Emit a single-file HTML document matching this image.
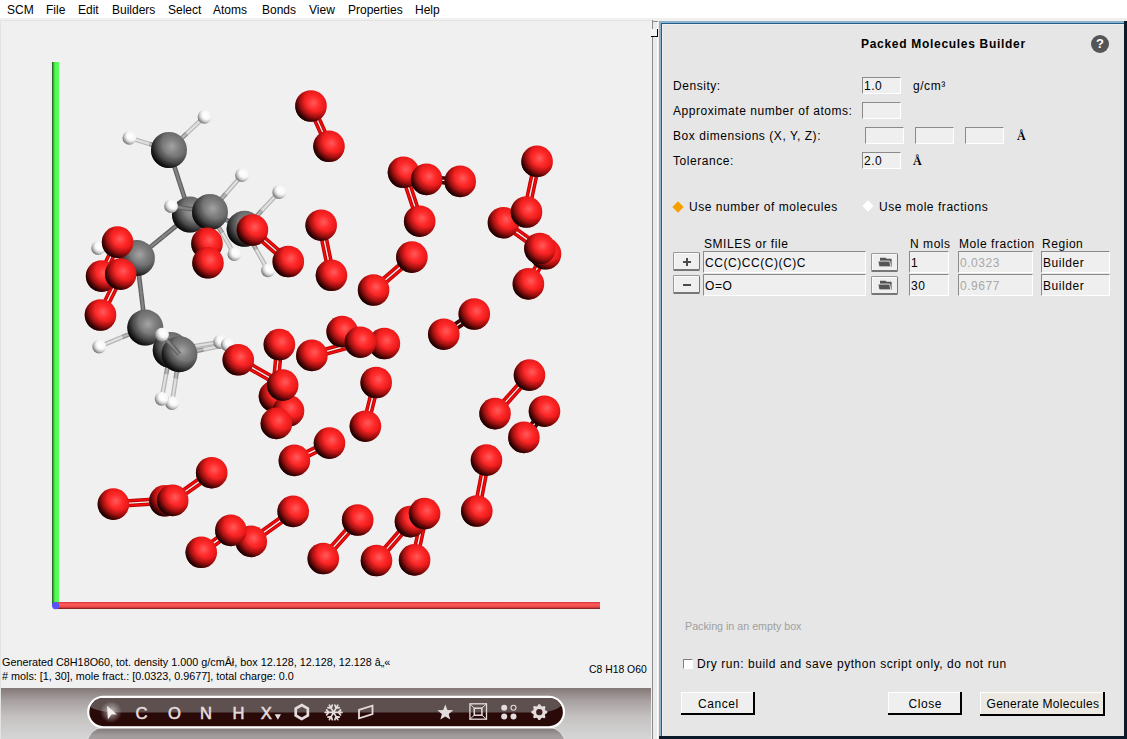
<!DOCTYPE html>
<html><head><meta charset="utf-8">
<style>
*{margin:0;padding:0;box-sizing:border-box}
html,body{width:1127px;height:739px;overflow:hidden;background:#fff;font-family:"Liberation Sans",sans-serif;color:#000}
.a{position:absolute;white-space:nowrap;line-height:1}
.m{position:absolute;top:4px;font-size:12px;line-height:1;white-space:nowrap}
.d{position:absolute;white-space:nowrap;font-size:12px;letter-spacing:0.55px;line-height:1}
.inp{position:absolute;background:#efefef;border-top:1px solid #8a8a8a;border-left:1px solid #8a8a8a;border-right:1px solid #fff;border-bottom:1px solid #fff}
.btn{position:absolute;background:#efefef;border-top:1px solid #999;border-left:1px solid #999;border-right:1px solid #777;border-bottom:2px solid #767676;border-radius:1.5px;box-shadow:inset 1px 1px 0 #fafafa}
.pb{position:absolute;background:#fff;border-right:2px solid #000;border-bottom:2px solid #000;}
.pb i{position:absolute;left:0;top:0;right:0;bottom:0;background:#efefef;border-left:1px solid #fff;border-top:1px solid #fff}
</style></head><body>
<div class="m" style="left:7px">SCM</div><div class="m" style="left:46px">File</div><div class="m" style="left:78px">Edit</div><div class="m" style="left:112px">Builders</div><div class="m" style="left:168px">Select</div><div class="m" style="left:213px">Atoms</div><div class="m" style="left:262px">Bonds</div><div class="m" style="left:309px">View</div><div class="m" style="left:348px">Properties</div><div class="m" style="left:415px">Help</div>
<div style="position:absolute;left:0;top:18px;width:1127px;height:3px;background:#f0f0f0"></div>
<div style="position:absolute;left:0;top:20px;width:652px;height:719px;background:#f0f0f0;border-top:1px solid #e3e3e3;border-left:1px solid #e3e3e3"></div>
<svg width="652" height="632" viewBox="0 20 652 632" style="position:absolute;left:0;top:20px">
<defs>
<radialGradient id="gO" cx="0.56" cy="0.42" r="0.6" fx="0.58" fy="0.4">
<stop offset="0" stop-color="#ff5c5c"/><stop offset="0.35" stop-color="#ff2a2a"/><stop offset="0.75" stop-color="#e41414"/><stop offset="1" stop-color="#d00c0c"/></radialGradient>
<radialGradient id="gS" cx="0.7" cy="0.3" r="0.9" fx="0.7" fy="0.3">
<stop offset="0" stop-color="#000" stop-opacity="0"/><stop offset="0.42" stop-color="#000" stop-opacity="0"/><stop offset="0.62" stop-color="#000" stop-opacity="0.3"/><stop offset="0.77" stop-color="#000" stop-opacity="0.72"/><stop offset="0.88" stop-color="#000" stop-opacity="1"/></radialGradient>
<radialGradient id="gC" cx="0.56" cy="0.42" r="0.6" fx="0.58" fy="0.4">
<stop offset="0" stop-color="#a4a4a4"/><stop offset="0.35" stop-color="#808080"/><stop offset="0.75" stop-color="#646464"/><stop offset="1" stop-color="#5a5a5a"/></radialGradient>
<radialGradient id="gH" cx="0.56" cy="0.42" r="0.6" fx="0.58" fy="0.4">
<stop offset="0" stop-color="#ffffff"/><stop offset="0.5" stop-color="#f8f8f8"/><stop offset="1" stop-color="#e8e8e8"/></radialGradient>
<linearGradient id="gX" x1="0" y1="0" x2="0" y2="1"><stop offset="0" stop-color="#d83a3a"/><stop offset="0.35" stop-color="#ff5a5a"/><stop offset="0.7" stop-color="#f04848"/><stop offset="1" stop-color="#701818"/></linearGradient>
<linearGradient id="gY" x1="0" y1="0" x2="1" y2="0"><stop offset="0" stop-color="#1c501c"/><stop offset="0.28" stop-color="#40d040"/><stop offset="0.5" stop-color="#55f855"/><stop offset="1" stop-color="#58ff58"/></linearGradient>
</defs>
<rect x="52" y="62" width="7" height="544" fill="url(#gY)"/>
<rect x="55" y="602" width="545" height="7" fill="url(#gX)"/>
<circle cx="55.6" cy="605.6" r="3.6" fill="#5555ff"/>

<line x1="169.0" y1="150.0" x2="149.2" y2="143.9" stroke="#8c8c8c" stroke-width="4.6"/><line x1="149.2" y1="143.9" x2="129.4" y2="137.9" stroke="#b4b4b4" stroke-width="4.6"/><line x1="169.0" y1="150.0" x2="149.2" y2="143.9" stroke="#b8b8b8" stroke-width="2.2"/><line x1="149.2" y1="143.9" x2="129.4" y2="137.9" stroke="#e0e0e0" stroke-width="2.2"/>
<line x1="169.0" y1="150.0" x2="186.8" y2="133.4" stroke="#8c8c8c" stroke-width="4.6"/><line x1="186.8" y1="133.4" x2="204.5" y2="116.9" stroke="#b4b4b4" stroke-width="4.6"/><line x1="169.0" y1="150.0" x2="186.8" y2="133.4" stroke="#b8b8b8" stroke-width="2.2"/><line x1="186.8" y1="133.4" x2="204.5" y2="116.9" stroke="#e0e0e0" stroke-width="2.2"/>
<line x1="169.0" y1="150.0" x2="179.5" y2="182.3" stroke="#606060" stroke-width="4.6"/><line x1="179.5" y1="182.3" x2="190.0" y2="214.6" stroke="#606060" stroke-width="4.6"/><line x1="169.0" y1="150.0" x2="179.5" y2="182.3" stroke="#848484" stroke-width="2.2"/><line x1="179.5" y1="182.3" x2="190.0" y2="214.6" stroke="#848484" stroke-width="2.2"/>
<line x1="190.0" y1="214.6" x2="163.4" y2="236.4" stroke="#606060" stroke-width="4.6"/><line x1="163.4" y1="236.4" x2="136.9" y2="258.1" stroke="#606060" stroke-width="4.6"/><line x1="190.0" y1="214.6" x2="163.4" y2="236.4" stroke="#848484" stroke-width="2.2"/><line x1="163.4" y1="236.4" x2="136.9" y2="258.1" stroke="#848484" stroke-width="2.2"/>
<line x1="210.0" y1="212.0" x2="226.0" y2="193.6" stroke="#8c8c8c" stroke-width="4.6"/><line x1="226.0" y1="193.6" x2="242.0" y2="175.2" stroke="#b4b4b4" stroke-width="4.6"/><line x1="210.0" y1="212.0" x2="226.0" y2="193.6" stroke="#b8b8b8" stroke-width="2.2"/><line x1="226.0" y1="193.6" x2="242.0" y2="175.2" stroke="#e0e0e0" stroke-width="2.2"/>
<line x1="210.0" y1="212.0" x2="227.3" y2="220.4" stroke="#606060" stroke-width="4.6"/><line x1="227.3" y1="220.4" x2="244.6" y2="228.8" stroke="#606060" stroke-width="4.6"/><line x1="210.0" y1="212.0" x2="227.3" y2="220.4" stroke="#848484" stroke-width="2.2"/><line x1="227.3" y1="220.4" x2="244.6" y2="228.8" stroke="#848484" stroke-width="2.2"/>
<line x1="210.0" y1="212.0" x2="222.2" y2="233.1" stroke="#8c8c8c" stroke-width="4.6"/><line x1="222.2" y1="233.1" x2="234.4" y2="254.2" stroke="#b4b4b4" stroke-width="4.6"/><line x1="210.0" y1="212.0" x2="222.2" y2="233.1" stroke="#b8b8b8" stroke-width="2.2"/><line x1="222.2" y1="233.1" x2="234.4" y2="254.2" stroke="#e0e0e0" stroke-width="2.2"/>
<line x1="244.6" y1="228.8" x2="261.9" y2="210.4" stroke="#8c8c8c" stroke-width="4.6"/><line x1="261.9" y1="210.4" x2="279.2" y2="192.0" stroke="#b4b4b4" stroke-width="4.6"/><line x1="244.6" y1="228.8" x2="261.9" y2="210.4" stroke="#b8b8b8" stroke-width="2.2"/><line x1="261.9" y1="210.4" x2="279.2" y2="192.0" stroke="#e0e0e0" stroke-width="2.2"/>
<line x1="244.6" y1="228.8" x2="256.3" y2="249.6" stroke="#8c8c8c" stroke-width="4.6"/><line x1="256.3" y1="249.6" x2="268.0" y2="270.4" stroke="#b4b4b4" stroke-width="4.6"/><line x1="244.6" y1="228.8" x2="256.3" y2="249.6" stroke="#b8b8b8" stroke-width="2.2"/><line x1="256.3" y1="249.6" x2="268.0" y2="270.4" stroke="#e0e0e0" stroke-width="2.2"/>
<line x1="136.9" y1="258.1" x2="141.1" y2="292.9" stroke="#606060" stroke-width="4.6"/><line x1="141.1" y1="292.9" x2="145.3" y2="327.6" stroke="#606060" stroke-width="4.6"/><line x1="136.9" y1="258.1" x2="141.1" y2="292.9" stroke="#848484" stroke-width="2.2"/><line x1="141.1" y1="292.9" x2="145.3" y2="327.6" stroke="#848484" stroke-width="2.2"/>
<line x1="136.9" y1="258.1" x2="117.5" y2="253.1" stroke="#8c8c8c" stroke-width="4.6"/><line x1="117.5" y1="253.1" x2="98.1" y2="248.1" stroke="#b4b4b4" stroke-width="4.6"/><line x1="136.9" y1="258.1" x2="117.5" y2="253.1" stroke="#b8b8b8" stroke-width="2.2"/><line x1="117.5" y1="253.1" x2="98.1" y2="248.1" stroke="#e0e0e0" stroke-width="2.2"/>
<line x1="145.3" y1="327.6" x2="122.2" y2="337.1" stroke="#8c8c8c" stroke-width="4.6"/><line x1="122.2" y1="337.1" x2="99.2" y2="346.7" stroke="#b4b4b4" stroke-width="4.6"/><line x1="145.3" y1="327.6" x2="122.2" y2="337.1" stroke="#b8b8b8" stroke-width="2.2"/><line x1="122.2" y1="337.1" x2="99.2" y2="346.7" stroke="#e0e0e0" stroke-width="2.2"/>
<line x1="145.3" y1="327.6" x2="162.4" y2="340.9" stroke="#606060" stroke-width="4.6"/><line x1="162.4" y1="340.9" x2="179.4" y2="354.2" stroke="#606060" stroke-width="4.6"/><line x1="145.3" y1="327.6" x2="162.4" y2="340.9" stroke="#848484" stroke-width="2.2"/><line x1="162.4" y1="340.9" x2="179.4" y2="354.2" stroke="#848484" stroke-width="2.2"/>
<line x1="170.7" y1="350.0" x2="195.4" y2="346.0" stroke="#8c8c8c" stroke-width="4.6"/><line x1="195.4" y1="346.0" x2="220.1" y2="342.0" stroke="#b4b4b4" stroke-width="4.6"/><line x1="170.7" y1="350.0" x2="195.4" y2="346.0" stroke="#b8b8b8" stroke-width="2.2"/><line x1="195.4" y1="346.0" x2="220.1" y2="342.0" stroke="#e0e0e0" stroke-width="2.2"/>
<line x1="179.4" y1="354.2" x2="203.6" y2="349.4" stroke="#8c8c8c" stroke-width="4.6"/><line x1="203.6" y1="349.4" x2="227.7" y2="344.6" stroke="#b4b4b4" stroke-width="4.6"/><line x1="179.4" y1="354.2" x2="203.6" y2="349.4" stroke="#b8b8b8" stroke-width="2.2"/><line x1="203.6" y1="349.4" x2="227.7" y2="344.6" stroke="#e0e0e0" stroke-width="2.2"/>
<line x1="170.7" y1="350.0" x2="166.1" y2="374.4" stroke="#8c8c8c" stroke-width="4.6"/><line x1="166.1" y1="374.4" x2="161.6" y2="398.8" stroke="#b4b4b4" stroke-width="4.6"/><line x1="170.7" y1="350.0" x2="166.1" y2="374.4" stroke="#b8b8b8" stroke-width="2.2"/><line x1="166.1" y1="374.4" x2="161.6" y2="398.8" stroke="#e0e0e0" stroke-width="2.2"/>
<line x1="179.4" y1="354.2" x2="175.7" y2="378.6" stroke="#8c8c8c" stroke-width="4.6"/><line x1="175.7" y1="378.6" x2="172.0" y2="403.1" stroke="#b4b4b4" stroke-width="4.6"/><line x1="179.4" y1="354.2" x2="175.7" y2="378.6" stroke="#b8b8b8" stroke-width="2.2"/><line x1="175.7" y1="378.6" x2="172.0" y2="403.1" stroke="#e0e0e0" stroke-width="2.2"/>
<line x1="313.2" y1="105.0" x2="331.2" y2="145.3" stroke="#b80000" stroke-width="3.5"/><line x1="313.2" y1="105.0" x2="331.2" y2="145.3" stroke="#f20c0c" stroke-width="1.8"/><line x1="308.8" y1="107.0" x2="326.8" y2="147.3" stroke="#b80000" stroke-width="3.5"/><line x1="308.8" y1="107.0" x2="326.8" y2="147.3" stroke="#f20c0c" stroke-width="1.8"/>
<line x1="405.8" y1="171.5" x2="422.0" y2="220.4" stroke="#b80000" stroke-width="3.5"/><line x1="405.8" y1="171.5" x2="422.0" y2="220.4" stroke="#f20c0c" stroke-width="1.8"/><line x1="401.2" y1="173.1" x2="417.4" y2="222.0" stroke="#b80000" stroke-width="3.5"/><line x1="401.2" y1="173.1" x2="417.4" y2="222.0" stroke="#f20c0c" stroke-width="1.8"/>
<line x1="426.7" y1="177.0" x2="460.3" y2="179.0" stroke="#2a0000" stroke-width="3.5"/><line x1="426.7" y1="177.0" x2="460.3" y2="179.0" stroke="#500404" stroke-width="1.8"/><line x1="426.5" y1="181.8" x2="460.1" y2="183.8" stroke="#2a0000" stroke-width="3.5"/><line x1="426.5" y1="181.8" x2="460.1" y2="183.8" stroke="#500404" stroke-width="1.8"/>
<line x1="539.5" y1="161.9" x2="528.9" y2="212.5" stroke="#b80000" stroke-width="3.5"/><line x1="539.5" y1="161.9" x2="528.9" y2="212.5" stroke="#f20c0c" stroke-width="1.8"/><line x1="534.7" y1="160.9" x2="524.1" y2="211.5" stroke="#b80000" stroke-width="3.5"/><line x1="534.7" y1="160.9" x2="524.1" y2="211.5" stroke="#f20c0c" stroke-width="1.8"/>
<line x1="504.9" y1="220.7" x2="541.3" y2="246.6" stroke="#b80000" stroke-width="3.5"/><line x1="504.9" y1="220.7" x2="541.3" y2="246.6" stroke="#f20c0c" stroke-width="1.8"/><line x1="502.1" y1="224.7" x2="538.5" y2="250.6" stroke="#b80000" stroke-width="3.5"/><line x1="502.1" y1="224.7" x2="538.5" y2="250.6" stroke="#f20c0c" stroke-width="1.8"/>
<line x1="547.6" y1="255.0" x2="530.5" y2="285.1" stroke="#b80000" stroke-width="3.5"/><line x1="547.6" y1="255.0" x2="530.5" y2="285.1" stroke="#f20c0c" stroke-width="1.8"/><line x1="543.4" y1="252.6" x2="526.3" y2="282.7" stroke="#b80000" stroke-width="3.5"/><line x1="543.4" y1="252.6" x2="526.3" y2="282.7" stroke="#f20c0c" stroke-width="1.8"/>
<line x1="323.6" y1="224.7" x2="333.9" y2="274.8" stroke="#b80000" stroke-width="3.5"/><line x1="323.6" y1="224.7" x2="333.9" y2="274.8" stroke="#f20c0c" stroke-width="1.8"/><line x1="318.8" y1="225.7" x2="329.1" y2="275.8" stroke="#b80000" stroke-width="3.5"/><line x1="318.8" y1="225.7" x2="329.1" y2="275.8" stroke="#f20c0c" stroke-width="1.8"/>
<line x1="413.5" y1="259.0" x2="375.2" y2="291.9" stroke="#b80000" stroke-width="3.5"/><line x1="413.5" y1="259.0" x2="375.2" y2="291.9" stroke="#f20c0c" stroke-width="1.8"/><line x1="410.3" y1="255.2" x2="372.0" y2="288.1" stroke="#b80000" stroke-width="3.5"/><line x1="410.3" y1="255.2" x2="372.0" y2="288.1" stroke="#f20c0c" stroke-width="1.8"/>
<line x1="475.7" y1="316.0" x2="445.2" y2="336.2" stroke="#2a0000" stroke-width="3.5"/><line x1="475.7" y1="316.0" x2="445.2" y2="336.2" stroke="#500404" stroke-width="1.8"/><line x1="472.9" y1="312.0" x2="442.4" y2="332.2" stroke="#2a0000" stroke-width="3.5"/><line x1="472.9" y1="312.0" x2="442.4" y2="332.2" stroke="#500404" stroke-width="1.8"/>
<line x1="311.3" y1="353.0" x2="359.8" y2="339.8" stroke="#b80000" stroke-width="3.5"/><line x1="311.3" y1="353.0" x2="359.8" y2="339.8" stroke="#f20c0c" stroke-width="1.8"/><line x1="312.5" y1="357.8" x2="361.0" y2="344.6" stroke="#b80000" stroke-width="3.5"/><line x1="312.5" y1="357.8" x2="361.0" y2="344.6" stroke="#f20c0c" stroke-width="1.8"/>
<line x1="342.9" y1="329.2" x2="385.1" y2="341.1" stroke="#b80000" stroke-width="3.5"/><line x1="342.9" y1="329.2" x2="385.1" y2="341.1" stroke="#f20c0c" stroke-width="1.8"/><line x1="341.5" y1="334.0" x2="383.7" y2="345.9" stroke="#b80000" stroke-width="3.5"/><line x1="341.5" y1="334.0" x2="383.7" y2="345.9" stroke="#f20c0c" stroke-width="1.8"/>
<line x1="378.6" y1="383.1" x2="367.8" y2="426.8" stroke="#b80000" stroke-width="3.5"/><line x1="378.6" y1="383.1" x2="367.8" y2="426.8" stroke="#f20c0c" stroke-width="1.8"/><line x1="373.8" y1="381.9" x2="363.0" y2="425.6" stroke="#b80000" stroke-width="3.5"/><line x1="373.8" y1="381.9" x2="363.0" y2="425.6" stroke="#f20c0c" stroke-width="1.8"/>
<line x1="239.5" y1="357.7" x2="283.9" y2="383.0" stroke="#b80000" stroke-width="3.5"/><line x1="239.5" y1="357.7" x2="283.9" y2="383.0" stroke="#f20c0c" stroke-width="1.8"/><line x1="237.1" y1="361.9" x2="281.5" y2="387.2" stroke="#b80000" stroke-width="3.5"/><line x1="237.1" y1="361.9" x2="281.5" y2="387.2" stroke="#f20c0c" stroke-width="1.8"/>
<line x1="281.8" y1="344.8" x2="276.9" y2="396.5" stroke="#b80000" stroke-width="3.5"/><line x1="281.8" y1="344.8" x2="276.9" y2="396.5" stroke="#f20c0c" stroke-width="1.8"/><line x1="277.0" y1="344.4" x2="272.1" y2="396.1" stroke="#b80000" stroke-width="3.5"/><line x1="277.0" y1="344.4" x2="272.1" y2="396.1" stroke="#f20c0c" stroke-width="1.8"/>
<line x1="274.6" y1="421.7" x2="286.7" y2="409.1" stroke="#b80000" stroke-width="3.5"/><line x1="274.6" y1="421.7" x2="286.7" y2="409.1" stroke="#f20c0c" stroke-width="1.8"/><line x1="278.2" y1="425.1" x2="290.3" y2="412.5" stroke="#b80000" stroke-width="3.5"/><line x1="278.2" y1="425.1" x2="290.3" y2="412.5" stroke="#f20c0c" stroke-width="1.8"/>
<line x1="330.6" y1="445.3" x2="295.5" y2="462.6" stroke="#b80000" stroke-width="3.5"/><line x1="330.6" y1="445.3" x2="295.5" y2="462.6" stroke="#f20c0c" stroke-width="1.8"/><line x1="328.4" y1="440.9" x2="293.3" y2="458.2" stroke="#b80000" stroke-width="3.5"/><line x1="328.4" y1="440.9" x2="293.3" y2="458.2" stroke="#f20c0c" stroke-width="1.8"/>
<line x1="531.3" y1="376.7" x2="496.9" y2="415.2" stroke="#b80000" stroke-width="3.5"/><line x1="531.3" y1="376.7" x2="496.9" y2="415.2" stroke="#f20c0c" stroke-width="1.8"/><line x1="527.7" y1="373.5" x2="493.3" y2="412.0" stroke="#b80000" stroke-width="3.5"/><line x1="527.7" y1="373.5" x2="493.3" y2="412.0" stroke="#f20c0c" stroke-width="1.8"/>
<line x1="546.4" y1="412.7" x2="525.8" y2="438.9" stroke="#2a0000" stroke-width="3.5"/><line x1="546.4" y1="412.7" x2="525.8" y2="438.9" stroke="#500404" stroke-width="1.8"/><line x1="542.6" y1="409.7" x2="522.0" y2="435.9" stroke="#2a0000" stroke-width="3.5"/><line x1="542.6" y1="409.7" x2="522.0" y2="435.9" stroke="#500404" stroke-width="1.8"/>
<line x1="488.9" y1="460.6" x2="479.2" y2="511.5" stroke="#b80000" stroke-width="3.5"/><line x1="488.9" y1="460.6" x2="479.2" y2="511.5" stroke="#f20c0c" stroke-width="1.8"/><line x1="484.1" y1="459.6" x2="474.4" y2="510.5" stroke="#b80000" stroke-width="3.5"/><line x1="484.1" y1="459.6" x2="474.4" y2="510.5" stroke="#f20c0c" stroke-width="1.8"/>
<line x1="427.0" y1="514.1" x2="417.0" y2="560.4" stroke="#b80000" stroke-width="3.5"/><line x1="427.0" y1="514.1" x2="417.0" y2="560.4" stroke="#f20c0c" stroke-width="1.8"/><line x1="422.2" y1="513.1" x2="412.2" y2="559.4" stroke="#b80000" stroke-width="3.5"/><line x1="422.2" y1="513.1" x2="412.2" y2="559.4" stroke="#f20c0c" stroke-width="1.8"/>
<line x1="412.3" y1="523.2" x2="378.3" y2="562.1" stroke="#b80000" stroke-width="3.5"/><line x1="412.3" y1="523.2" x2="378.3" y2="562.1" stroke="#f20c0c" stroke-width="1.8"/><line x1="408.7" y1="520.0" x2="374.7" y2="558.9" stroke="#b80000" stroke-width="3.5"/><line x1="408.7" y1="520.0" x2="374.7" y2="558.9" stroke="#f20c0c" stroke-width="1.8"/>
<line x1="359.5" y1="521.6" x2="325.1" y2="560.1" stroke="#b80000" stroke-width="3.5"/><line x1="359.5" y1="521.6" x2="325.1" y2="560.1" stroke="#f20c0c" stroke-width="1.8"/><line x1="355.9" y1="518.4" x2="321.5" y2="556.9" stroke="#b80000" stroke-width="3.5"/><line x1="355.9" y1="518.4" x2="321.5" y2="556.9" stroke="#f20c0c" stroke-width="1.8"/>
<line x1="294.6" y1="513.4" x2="252.7" y2="543.4" stroke="#b80000" stroke-width="3.5"/><line x1="294.6" y1="513.4" x2="252.7" y2="543.4" stroke="#f20c0c" stroke-width="1.8"/><line x1="291.8" y1="509.4" x2="249.9" y2="539.4" stroke="#b80000" stroke-width="3.5"/><line x1="291.8" y1="509.4" x2="249.9" y2="539.4" stroke="#f20c0c" stroke-width="1.8"/>
<line x1="232.4" y1="532.4" x2="202.8" y2="554.3" stroke="#b80000" stroke-width="3.5"/><line x1="232.4" y1="532.4" x2="202.8" y2="554.3" stroke="#f20c0c" stroke-width="1.8"/><line x1="229.4" y1="528.4" x2="199.8" y2="550.3" stroke="#b80000" stroke-width="3.5"/><line x1="229.4" y1="528.4" x2="199.8" y2="550.3" stroke="#f20c0c" stroke-width="1.8"/>
<line x1="113.2" y1="501.7" x2="164.7" y2="498.4" stroke="#b80000" stroke-width="3.5"/><line x1="113.2" y1="501.7" x2="164.7" y2="498.4" stroke="#f20c0c" stroke-width="1.8"/><line x1="113.6" y1="506.5" x2="165.1" y2="503.2" stroke="#b80000" stroke-width="3.5"/><line x1="113.6" y1="506.5" x2="165.1" y2="503.2" stroke="#f20c0c" stroke-width="1.8"/>
<line x1="171.3" y1="498.4" x2="210.3" y2="470.7" stroke="#b80000" stroke-width="3.5"/><line x1="171.3" y1="498.4" x2="210.3" y2="470.7" stroke="#f20c0c" stroke-width="1.8"/><line x1="174.1" y1="502.4" x2="213.1" y2="474.7" stroke="#b80000" stroke-width="3.5"/><line x1="174.1" y1="502.4" x2="213.1" y2="474.7" stroke="#f20c0c" stroke-width="1.8"/>
<line x1="209.4" y1="243.3" x2="210.4" y2="262.7" stroke="#b80000" stroke-width="3.5"/><line x1="209.4" y1="243.3" x2="210.4" y2="262.7" stroke="#f20c0c" stroke-width="1.8"/><line x1="204.6" y1="243.5" x2="205.6" y2="262.9" stroke="#b80000" stroke-width="3.5"/><line x1="204.6" y1="243.5" x2="205.6" y2="262.9" stroke="#f20c0c" stroke-width="1.8"/>
<line x1="254.0" y1="228.2" x2="289.9" y2="259.7" stroke="#b80000" stroke-width="3.5"/><line x1="254.0" y1="228.2" x2="289.9" y2="259.7" stroke="#f20c0c" stroke-width="1.8"/><line x1="250.8" y1="231.8" x2="286.7" y2="263.3" stroke="#b80000" stroke-width="3.5"/><line x1="250.8" y1="231.8" x2="286.7" y2="263.3" stroke="#f20c0c" stroke-width="1.8"/>
<line x1="119.8" y1="243.1" x2="103.8" y2="277.1" stroke="#b80000" stroke-width="3.5"/><line x1="119.8" y1="243.1" x2="103.8" y2="277.1" stroke="#f20c0c" stroke-width="1.8"/><line x1="115.4" y1="241.1" x2="99.4" y2="275.1" stroke="#b80000" stroke-width="3.5"/><line x1="115.4" y1="241.1" x2="99.4" y2="275.1" stroke="#f20c0c" stroke-width="1.8"/>
<line x1="122.9" y1="275.2" x2="102.7" y2="316.1" stroke="#b80000" stroke-width="3.5"/><line x1="122.9" y1="275.2" x2="102.7" y2="316.1" stroke="#f20c0c" stroke-width="1.8"/><line x1="118.5" y1="273.0" x2="98.3" y2="313.9" stroke="#b80000" stroke-width="3.5"/><line x1="118.5" y1="273.0" x2="98.3" y2="313.9" stroke="#f20c0c" stroke-width="1.8"/>
<circle cx="169.0" cy="150.0" r="18" fill="url(#gC)"/><circle cx="169.0" cy="150.0" r="18" fill="url(#gS)" opacity="1"/>
<circle cx="129.4" cy="137.9" r="6.9" fill="url(#gH)"/><circle cx="129.4" cy="137.9" r="6.9" fill="url(#gS)" opacity="0.55"/>
<circle cx="204.5" cy="116.9" r="6.9" fill="url(#gH)"/><circle cx="204.5" cy="116.9" r="6.9" fill="url(#gS)" opacity="0.55"/>
<circle cx="98.1" cy="248.1" r="6.9" fill="url(#gH)"/><circle cx="98.1" cy="248.1" r="6.9" fill="url(#gS)" opacity="0.55"/>
<circle cx="136.9" cy="258.1" r="18" fill="url(#gC)"/><circle cx="136.9" cy="258.1" r="18" fill="url(#gS)" opacity="1"/>
<circle cx="190.0" cy="214.6" r="18" fill="url(#gC)"/><circle cx="190.0" cy="214.6" r="18" fill="url(#gS)" opacity="1"/>
<line x1="210.0" y1="212.0" x2="190.5" y2="209.1" stroke="#606060" stroke-width="4.6"/><line x1="190.5" y1="209.1" x2="171.0" y2="206.1" stroke="#606060" stroke-width="4.6"/><line x1="210.0" y1="212.0" x2="190.5" y2="209.1" stroke="#848484" stroke-width="2.2"/><line x1="190.5" y1="209.1" x2="171.0" y2="206.1" stroke="#848484" stroke-width="2.2"/>
<circle cx="171.0" cy="206.1" r="6.9" fill="url(#gH)"/><circle cx="171.0" cy="206.1" r="6.9" fill="url(#gS)" opacity="0.55"/>
<circle cx="242.0" cy="175.2" r="6.9" fill="url(#gH)"/><circle cx="242.0" cy="175.2" r="6.9" fill="url(#gS)" opacity="0.55"/>
<circle cx="279.2" cy="192.0" r="6.9" fill="url(#gH)"/><circle cx="279.2" cy="192.0" r="6.9" fill="url(#gS)" opacity="0.55"/>
<circle cx="210.0" cy="212.0" r="18" fill="url(#gC)"/><circle cx="210.0" cy="212.0" r="18" fill="url(#gS)" opacity="1"/>
<circle cx="244.6" cy="228.8" r="18" fill="url(#gC)"/><circle cx="244.6" cy="228.8" r="18" fill="url(#gS)" opacity="1"/>
<circle cx="268.0" cy="270.4" r="6.9" fill="url(#gH)"/><circle cx="268.0" cy="270.4" r="6.9" fill="url(#gS)" opacity="0.55"/>
<circle cx="145.3" cy="327.6" r="18" fill="url(#gC)"/><circle cx="145.3" cy="327.6" r="18" fill="url(#gS)" opacity="1"/>
<circle cx="99.2" cy="346.7" r="6.9" fill="url(#gH)"/><circle cx="99.2" cy="346.7" r="6.9" fill="url(#gS)" opacity="0.55"/>
<circle cx="170.7" cy="350.0" r="18" fill="url(#gC)"/><circle cx="170.7" cy="350.0" r="18" fill="url(#gS)" opacity="1"/>
<circle cx="172.0" cy="403.1" r="6.9" fill="url(#gH)"/><circle cx="172.0" cy="403.1" r="6.9" fill="url(#gS)" opacity="0.55"/>
<circle cx="161.6" cy="398.8" r="6.9" fill="url(#gH)"/><circle cx="161.6" cy="398.8" r="6.9" fill="url(#gS)" opacity="0.55"/>
<circle cx="179.4" cy="354.2" r="18" fill="url(#gC)"/><circle cx="179.4" cy="354.2" r="18" fill="url(#gS)" opacity="1"/>
<line x1="179.4" y1="354.2" x2="170.7" y2="344.4" stroke="#606060" stroke-width="4.6"/><line x1="170.7" y1="344.4" x2="162.0" y2="334.7" stroke="#606060" stroke-width="4.6"/><line x1="179.4" y1="354.2" x2="170.7" y2="344.4" stroke="#848484" stroke-width="2.2"/><line x1="170.7" y1="344.4" x2="162.0" y2="334.7" stroke="#848484" stroke-width="2.2"/>
<circle cx="162.0" cy="334.7" r="6.9" fill="url(#gH)"/><circle cx="162.0" cy="334.7" r="6.9" fill="url(#gS)" opacity="0.55"/>
<circle cx="220.1" cy="342.0" r="6.9" fill="url(#gH)"/><circle cx="220.1" cy="342.0" r="6.9" fill="url(#gS)" opacity="0.55"/>
<circle cx="227.7" cy="344.6" r="6.9" fill="url(#gH)"/><circle cx="227.7" cy="344.6" r="6.9" fill="url(#gS)" opacity="0.55"/>
<circle cx="234.4" cy="254.2" r="6.9" fill="url(#gH)"/><circle cx="234.4" cy="254.2" r="6.9" fill="url(#gS)" opacity="0.55"/>
<circle cx="207.0" cy="243.4" r="15.8" fill="url(#gO)"/><circle cx="207.0" cy="243.4" r="15.8" fill="url(#gS)" opacity="1"/>
<circle cx="208.0" cy="262.8" r="15.8" fill="url(#gO)"/><circle cx="208.0" cy="262.8" r="15.8" fill="url(#gS)" opacity="1"/>
<circle cx="252.4" cy="230.0" r="15.8" fill="url(#gO)"/><circle cx="252.4" cy="230.0" r="15.8" fill="url(#gS)" opacity="1"/>
<circle cx="288.3" cy="261.5" r="15.8" fill="url(#gO)"/><circle cx="288.3" cy="261.5" r="15.8" fill="url(#gS)" opacity="1"/>
<circle cx="101.6" cy="276.1" r="15.8" fill="url(#gO)"/><circle cx="101.6" cy="276.1" r="15.8" fill="url(#gS)" opacity="1"/>
<circle cx="117.6" cy="242.1" r="15.8" fill="url(#gO)"/><circle cx="117.6" cy="242.1" r="15.8" fill="url(#gS)" opacity="1"/>
<circle cx="100.5" cy="315.0" r="15.8" fill="url(#gO)"/><circle cx="100.5" cy="315.0" r="15.8" fill="url(#gS)" opacity="1"/>
<circle cx="120.7" cy="274.1" r="15.8" fill="url(#gO)"/><circle cx="120.7" cy="274.1" r="15.8" fill="url(#gS)" opacity="1"/>
<circle cx="311.0" cy="106.0" r="15.8" fill="url(#gO)"/><circle cx="311.0" cy="106.0" r="15.8" fill="url(#gS)" opacity="1"/>
<circle cx="329.0" cy="146.3" r="15.8" fill="url(#gO)"/><circle cx="329.0" cy="146.3" r="15.8" fill="url(#gS)" opacity="1"/>
<circle cx="403.5" cy="172.3" r="15.8" fill="url(#gO)"/><circle cx="403.5" cy="172.3" r="15.8" fill="url(#gS)" opacity="1"/>
<circle cx="419.7" cy="221.2" r="15.8" fill="url(#gO)"/><circle cx="419.7" cy="221.2" r="15.8" fill="url(#gS)" opacity="1"/>
<circle cx="426.6" cy="179.4" r="15.8" fill="url(#gO)"/><circle cx="426.6" cy="179.4" r="15.8" fill="url(#gS)" opacity="1"/>
<circle cx="460.2" cy="181.4" r="15.8" fill="url(#gO)"/><circle cx="460.2" cy="181.4" r="15.8" fill="url(#gS)" opacity="1"/>
<circle cx="537.1" cy="161.4" r="15.8" fill="url(#gO)"/><circle cx="537.1" cy="161.4" r="15.8" fill="url(#gS)" opacity="1"/>
<circle cx="545.5" cy="253.8" r="15.8" fill="url(#gO)"/><circle cx="545.5" cy="253.8" r="15.8" fill="url(#gS)" opacity="1"/>
<circle cx="528.4" cy="283.9" r="15.8" fill="url(#gO)"/><circle cx="528.4" cy="283.9" r="15.8" fill="url(#gS)" opacity="1"/>
<circle cx="503.5" cy="222.7" r="15.8" fill="url(#gO)"/><circle cx="503.5" cy="222.7" r="15.8" fill="url(#gS)" opacity="1"/>
<circle cx="526.5" cy="212.0" r="15.8" fill="url(#gO)"/><circle cx="526.5" cy="212.0" r="15.8" fill="url(#gS)" opacity="1"/>
<circle cx="539.9" cy="248.6" r="15.8" fill="url(#gO)"/><circle cx="539.9" cy="248.6" r="15.8" fill="url(#gS)" opacity="1"/>
<circle cx="321.2" cy="225.2" r="15.8" fill="url(#gO)"/><circle cx="321.2" cy="225.2" r="15.8" fill="url(#gS)" opacity="1"/>
<circle cx="331.5" cy="275.3" r="15.8" fill="url(#gO)"/><circle cx="331.5" cy="275.3" r="15.8" fill="url(#gS)" opacity="1"/>
<circle cx="411.9" cy="257.1" r="15.8" fill="url(#gO)"/><circle cx="411.9" cy="257.1" r="15.8" fill="url(#gS)" opacity="1"/>
<circle cx="373.6" cy="290.0" r="15.8" fill="url(#gO)"/><circle cx="373.6" cy="290.0" r="15.8" fill="url(#gS)" opacity="1"/>
<circle cx="474.3" cy="314.0" r="15.8" fill="url(#gO)"/><circle cx="474.3" cy="314.0" r="15.8" fill="url(#gS)" opacity="1"/>
<circle cx="443.8" cy="334.2" r="15.8" fill="url(#gO)"/><circle cx="443.8" cy="334.2" r="15.8" fill="url(#gS)" opacity="1"/>
<circle cx="342.2" cy="331.6" r="15.8" fill="url(#gO)"/><circle cx="342.2" cy="331.6" r="15.8" fill="url(#gS)" opacity="1"/>
<circle cx="384.4" cy="343.5" r="15.8" fill="url(#gO)"/><circle cx="384.4" cy="343.5" r="15.8" fill="url(#gS)" opacity="1"/>
<circle cx="311.9" cy="355.4" r="15.8" fill="url(#gO)"/><circle cx="311.9" cy="355.4" r="15.8" fill="url(#gS)" opacity="1"/>
<circle cx="360.4" cy="342.2" r="15.8" fill="url(#gO)"/><circle cx="360.4" cy="342.2" r="15.8" fill="url(#gS)" opacity="1"/>
<circle cx="376.2" cy="382.5" r="15.8" fill="url(#gO)"/><circle cx="376.2" cy="382.5" r="15.8" fill="url(#gS)" opacity="1"/>
<circle cx="365.4" cy="426.2" r="15.8" fill="url(#gO)"/><circle cx="365.4" cy="426.2" r="15.8" fill="url(#gS)" opacity="1"/>
<circle cx="238.3" cy="359.8" r="15.8" fill="url(#gO)"/><circle cx="238.3" cy="359.8" r="15.8" fill="url(#gS)" opacity="1"/>
<circle cx="279.4" cy="344.6" r="15.8" fill="url(#gO)"/><circle cx="279.4" cy="344.6" r="15.8" fill="url(#gS)" opacity="1"/>
<circle cx="274.5" cy="396.3" r="15.8" fill="url(#gO)"/><circle cx="274.5" cy="396.3" r="15.8" fill="url(#gS)" opacity="1"/>
<circle cx="288.5" cy="410.8" r="15.8" fill="url(#gO)"/><circle cx="288.5" cy="410.8" r="15.8" fill="url(#gS)" opacity="1"/>
<circle cx="282.7" cy="385.1" r="15.8" fill="url(#gO)"/><circle cx="282.7" cy="385.1" r="15.8" fill="url(#gS)" opacity="1"/>
<circle cx="276.4" cy="423.4" r="15.8" fill="url(#gO)"/><circle cx="276.4" cy="423.4" r="15.8" fill="url(#gS)" opacity="1"/>
<circle cx="329.5" cy="443.1" r="15.8" fill="url(#gO)"/><circle cx="329.5" cy="443.1" r="15.8" fill="url(#gS)" opacity="1"/>
<circle cx="294.4" cy="460.4" r="15.8" fill="url(#gO)"/><circle cx="294.4" cy="460.4" r="15.8" fill="url(#gS)" opacity="1"/>
<circle cx="529.5" cy="375.1" r="15.8" fill="url(#gO)"/><circle cx="529.5" cy="375.1" r="15.8" fill="url(#gS)" opacity="1"/>
<circle cx="495.1" cy="413.6" r="15.8" fill="url(#gO)"/><circle cx="495.1" cy="413.6" r="15.8" fill="url(#gS)" opacity="1"/>
<circle cx="544.5" cy="411.2" r="15.8" fill="url(#gO)"/><circle cx="544.5" cy="411.2" r="15.8" fill="url(#gS)" opacity="1"/>
<circle cx="523.9" cy="437.4" r="15.8" fill="url(#gO)"/><circle cx="523.9" cy="437.4" r="15.8" fill="url(#gS)" opacity="1"/>
<circle cx="486.5" cy="460.1" r="15.8" fill="url(#gO)"/><circle cx="486.5" cy="460.1" r="15.8" fill="url(#gS)" opacity="1"/>
<circle cx="476.8" cy="511.0" r="15.8" fill="url(#gO)"/><circle cx="476.8" cy="511.0" r="15.8" fill="url(#gS)" opacity="1"/>
<circle cx="410.5" cy="521.6" r="15.8" fill="url(#gO)"/><circle cx="410.5" cy="521.6" r="15.8" fill="url(#gS)" opacity="1"/>
<circle cx="376.5" cy="560.5" r="15.8" fill="url(#gO)"/><circle cx="376.5" cy="560.5" r="15.8" fill="url(#gS)" opacity="1"/>
<circle cx="424.6" cy="513.6" r="15.8" fill="url(#gO)"/><circle cx="424.6" cy="513.6" r="15.8" fill="url(#gS)" opacity="1"/>
<circle cx="414.6" cy="559.9" r="15.8" fill="url(#gO)"/><circle cx="414.6" cy="559.9" r="15.8" fill="url(#gS)" opacity="1"/>
<circle cx="357.7" cy="520.0" r="15.8" fill="url(#gO)"/><circle cx="357.7" cy="520.0" r="15.8" fill="url(#gS)" opacity="1"/>
<circle cx="323.3" cy="558.5" r="15.8" fill="url(#gO)"/><circle cx="323.3" cy="558.5" r="15.8" fill="url(#gS)" opacity="1"/>
<circle cx="251.3" cy="541.4" r="15.8" fill="url(#gO)"/><circle cx="251.3" cy="541.4" r="15.8" fill="url(#gS)" opacity="1"/>
<circle cx="293.2" cy="511.4" r="15.8" fill="url(#gO)"/><circle cx="293.2" cy="511.4" r="15.8" fill="url(#gS)" opacity="1"/>
<circle cx="201.3" cy="552.3" r="15.8" fill="url(#gO)"/><circle cx="201.3" cy="552.3" r="15.8" fill="url(#gS)" opacity="1"/>
<circle cx="230.9" cy="530.4" r="15.8" fill="url(#gO)"/><circle cx="230.9" cy="530.4" r="15.8" fill="url(#gS)" opacity="1"/>
<circle cx="113.4" cy="504.1" r="15.8" fill="url(#gO)"/><circle cx="113.4" cy="504.1" r="15.8" fill="url(#gS)" opacity="1"/>
<circle cx="164.9" cy="500.8" r="15.8" fill="url(#gO)"/><circle cx="164.9" cy="500.8" r="15.8" fill="url(#gS)" opacity="1"/>
<circle cx="211.7" cy="472.7" r="15.8" fill="url(#gO)"/><circle cx="211.7" cy="472.7" r="15.8" fill="url(#gS)" opacity="1"/>
<circle cx="172.7" cy="500.4" r="15.8" fill="url(#gO)"/><circle cx="172.7" cy="500.4" r="15.8" fill="url(#gS)" opacity="1"/>
</svg>
<div class="a" style="left:2px;top:657px;font-size:10.8px">Generated C8H18O60, tot. density 1.000 g/cmÂł, box 12.128, 12.128, 12.128 â„«</div>
<div class="a" style="left:2px;top:671px;font-size:10.8px"># mols: [1, 30], mole fract.: [0.0323, 0.9677], total charge: 0.0</div>
<div class="a" style="left:589px;top:665px;font-size:10.4px">C8 H18 O60</div>
<!-- toolbar -->
<div style="position:absolute;left:1px;top:688px;width:650px;height:51px;background:linear-gradient(#847878 0,#a8a1a1 25%,#c4c0c0 55%,#d6d6d6 100%)"></div>
<svg class="a" width="652" height="51" viewBox="0 688 652 51" style="left:0;top:688px">
<defs>
<radialGradient id="glow" cx="0.5" cy="0.5" r="0.5"><stop offset="0" stop-color="#fff" stop-opacity="0.7"/><stop offset="0.5" stop-color="#fff" stop-opacity="0.3"/><stop offset="1" stop-color="#fff" stop-opacity="0"/></radialGradient>
<clipPath id="pc"><rect x="89.3" y="698" width="473.6" height="28.2" rx="14.1"/></clipPath>
</defs>
<linearGradient id="refl" x1="0" y1="0" x2="0" y2="1"><stop offset="0" stop-color="#7e7777"/><stop offset="0.25" stop-color="#a29c9c"/><stop offset="1" stop-color="#b6b2b2"/></linearGradient>
<rect x="87.1" y="727.5" width="478" height="32.6" rx="16.3" fill="url(#refl)" stroke="#ececec" stroke-width="1" stroke-opacity="0.8"/>
<rect x="87.1" y="695.8" width="478" height="32.6" rx="16.3" fill="#fdfdfd"/>
<g clip-path="url(#pc)">
<rect x="89" y="697.8" width="474" height="29" fill="#2a0909"/>
<path d="M89 697.8 H563 V704 Q556 712 540 712.6 H120 Q96 712 89 706Z" fill="#5f5050"/>
<circle cx="111" cy="712" r="11" fill="url(#glow)"/>
</g>
<path d="M107.1 705.8 L116.9 714.6 L111.6 714.2 L107.9 719.4Z" fill="#f4f0f0"/>
<g fill="#e4dcdc" stroke="#e4dcdc" stroke-width="0.55" font-family="Liberation Sans" font-size="16.6px" text-anchor="middle">
<text x="141.6" y="719.2">C</text><text x="174.4" y="719.2">O</text><text x="206" y="719.2">N</text><text x="238.5" y="719.2">H</text><text x="266.4" y="719.2">X</text>
</g>
<path d="M274.7 714.2 H281 L277.85 719.8Z" fill="#e4dcdc"/>
<path d="M301.80 719.00 L295.74 715.50 L295.74 708.50 L301.80 705.00 L307.86 708.50 L307.86 715.50Z" fill="none" stroke="#e4dcdc" stroke-width="2.7"/>
<path d="M333.60 712.40L342.00 712.40M338.47 712.40L340.59 709.87M338.47 712.40L340.59 714.93M333.60 712.40L337.80 719.67M336.04 716.62L339.29 717.19M336.04 716.62L334.91 719.72M333.60 712.40L329.40 719.67M331.16 716.62L332.29 719.72M331.16 716.62L327.91 717.19M333.60 712.40L325.20 712.40M328.73 712.40L326.61 714.93M328.73 712.40L326.61 709.87M333.60 712.40L329.40 705.13M331.16 708.18L327.91 707.61M331.16 708.18L332.29 705.08M333.60 712.40L337.80 705.13M336.04 708.18L334.91 705.08M336.04 708.18L339.29 707.61" fill="none" stroke="#e4dcdc" stroke-width="1.7" stroke-linecap="round"/>
<path d="M359 709.8 L372.5 705.7 L372.5 714.2 L359 718.3Z" fill="none" stroke="#e4dcdc" stroke-width="1.8"/>
<path d="M445.30 704.40 L447.42 709.89 L453.29 710.20 L448.72 713.91 L450.24 719.60 L445.30 716.40 L440.36 719.60 L441.88 713.91 L437.31 710.20 L443.18 709.89Z" fill="#e4dcdc"/>
<g fill="none" stroke="#e4dcdc">
<rect x="469.9" y="703.8" width="16.6" height="15.4" stroke-width="1.3"/>
<rect x="474.3" y="708.2" width="7.6" height="7" stroke-width="1.5"/>
<path d="M469.9 703.8L474.3 708.2M486.5 703.8L481.9 708.2M469.9 719.2L474.3 715.2M486.5 719.2L481.9 715.2" stroke-width="1"/>
</g>
<circle cx="504.2" cy="707.7" r="3" fill="#e4dcdc"/><circle cx="513.5" cy="707.7" r="2.5" fill="none" stroke="#e4dcdc" stroke-width="1.1"/>
<circle cx="504.2" cy="716.5" r="3" fill="#e4dcdc"/><circle cx="513.5" cy="716.5" r="3" fill="#e4dcdc"/>
<path d="M547.26 711.32 L547.26 712.89 L545.33 713.93 L544.85 715.07 L545.48 717.18 L544.37 718.29 L542.27 717.66 L541.13 718.13 L540.08 720.06 L538.51 720.06 L537.47 718.13 L536.33 717.65 L534.22 718.28 L533.11 717.17 L533.74 715.07 L533.27 713.93 L531.34 712.88 L531.34 711.31 L533.27 710.27 L533.75 709.13 L533.12 707.02 L534.23 705.91 L536.33 706.54 L537.47 706.07 L538.52 704.14 L540.09 704.14 L541.13 706.07 L542.27 706.55 L544.38 705.92 L545.49 707.03 L544.86 709.13 L545.33 710.27Z" fill="#e4dcdc"/><circle cx="539.3" cy="712.1" r="3.2" fill="#3a2020"/>
</svg>
<!-- splitter -->
<div style="position:absolute;left:652px;top:20px;width:1px;height:719px;background:#8c8c8c"></div>
<div style="position:absolute;left:653px;top:20px;width:6px;height:719px;background:#ebebeb"></div>
<div style="position:absolute;left:657px;top:20px;width:1px;height:719px;background:#fff"></div>
<div style="position:absolute;left:652px;top:21px;width:6px;height:1px;background:#8c8c8c"></div>
<div style="position:absolute;left:651px;top:29px;width:6px;height:7px;background:#f4f4f4"></div>
<div style="position:absolute;left:651px;top:36px;width:7px;height:1px;background:#000"></div>
<div style="position:absolute;left:657px;top:29px;width:1px;height:8px;background:#000"></div>
<!-- dialog -->
<div style="position:absolute;left:659px;top:21px;width:468px;height:718px;background:#0a1a2a"></div>
<div style="position:absolute;left:659px;top:21px;width:465px;height:715px;background:#8eb0c8"></div>
<div style="position:absolute;left:661px;top:23px;width:463px;height:713px;background:#1e5f8e"></div>
<div style="position:absolute;left:662px;top:24px;width:462px;height:712px;background:#e6e6e6;border-left:1px solid #f2eeec;border-top:1px solid #f2eeec"></div>
<div class="a" style="left:861px;top:38px;font-size:12px;font-weight:bold;letter-spacing:0.7px">Packed Molecules Builder</div>
<div style="position:absolute;left:1091px;top:35px;width:18px;height:18px;border-radius:9px;background:#555;color:#fff;font-size:13px;font-weight:bold;text-align:center;line-height:18px">?</div>
<div class="d" style="left:673px;top:80px">Density:</div>
<div class="inp" style="left:862px;top:77px;width:39px;height:17px"></div>
<div class="d" style="left:864px;top:80px">1.0</div>
<div class="d" style="left:913px;top:80px">g/cm³</div>
<div class="d" style="left:673px;top:105px">Approximate number of atoms:</div>
<div class="inp" style="left:862px;top:102px;width:39px;height:17px"></div>
<div class="d" style="left:673px;top:130px">Box dimensions (X, Y, Z):</div>
<div class="inp" style="left:865px;top:127px;width:39px;height:17px"></div>
<div class="inp" style="left:915px;top:127px;width:39px;height:17px"></div>
<div class="inp" style="left:965px;top:127px;width:39px;height:17px"></div>
<div class="d" style="left:1017px;top:130px;font-family:'Liberation Serif';font-weight:bold">Å</div>
<div class="d" style="left:673px;top:155px">Tolerance:</div>
<div class="inp" style="left:862px;top:152px;width:39px;height:17px"></div>
<div class="d" style="left:864px;top:155px">2.0</div>
<div class="d" style="left:913px;top:155px;font-family:'Liberation Serif';font-weight:bold">Å</div>
<!-- radio -->
<div style="position:absolute;left:674px;top:202.5px;width:8px;height:8px;background:#f5a000;transform:rotate(45deg)"></div>
<div class="d" style="left:689px;top:201px">Use number of molecules</div>
<div style="position:absolute;left:864px;top:202px;width:8px;height:8px;background:#fff;transform:rotate(45deg)"></div>
<div class="d" style="left:879px;top:201px">Use mole fractions</div>
<!-- table -->
<div class="d" style="left:704px;top:238px">SMILES or file</div>
<div class="d" style="left:910px;top:238px">N mols</div>
<div class="d" style="left:959px;top:238px">Mole fraction</div>
<div class="d" style="left:1042px;top:238px">Region</div>
<div class="btn" style="left:673px;top:252px;width:27px;height:19px"></div>
<div class="btn" style="left:673px;top:275px;width:27px;height:19px"></div>
<div class="inp" style="left:703px;top:251px;width:163px;height:22px"></div>
<div class="inp" style="left:703px;top:274px;width:163px;height:22px"></div>
<div class="btn" style="left:871px;top:253px;width:27px;height:19px"></div>
<div class="btn" style="left:871px;top:276px;width:27px;height:19px"></div>
<div class="inp" style="left:909px;top:251px;width:40px;height:22px"></div>
<div class="inp" style="left:909px;top:274px;width:40px;height:22px"></div>
<div class="inp" style="left:958px;top:251px;width:75px;height:22px"></div>
<div class="inp" style="left:958px;top:274px;width:75px;height:22px"></div>
<div class="inp" style="left:1041px;top:251px;width:69px;height:22px"></div>
<div class="inp" style="left:1041px;top:274px;width:69px;height:22px"></div>
<div style="position:absolute;left:682.5px;top:261px;width:8.5px;height:2.2px;background:#4a4a4a"></div><div style="position:absolute;left:685.6px;top:257.8px;width:2.2px;height:8.5px;background:#4a4a4a"></div><div style="position:absolute;left:682.5px;top:284px;width:8.5px;height:2.4px;background:#4a4a4a"></div><svg class="a" width="16" height="11" viewBox="0 0 16 11" style="left:877px;top:257px"><path d="M3 0.8h5.6l1 1H14.6v8H3z" fill="#555"/><path d="M0.9 4.1h11.8l1.1 5.7H2z" fill="#555" stroke="#efefef" stroke-width="0.9"/></svg><svg class="a" width="16" height="11" viewBox="0 0 16 11" style="left:877px;top:280px"><path d="M3 0.8h5.6l1 1H14.6v8H3z" fill="#555"/><path d="M0.9 4.1h11.8l1.1 5.7H2z" fill="#555" stroke="#efefef" stroke-width="0.9"/></svg>
<div class="d" style="left:705px;top:257px">CC(C)CC(C)(C)C</div>
<div class="d" style="left:705px;top:280px">O=O</div>
<div class="d" style="left:911px;top:257px">1</div>
<div class="d" style="left:911px;top:280px">30</div>
<div class="d" style="left:960px;top:257px;color:#a8a8a8">0.0323</div>
<div class="d" style="left:960px;top:280px;color:#a8a8a8">0.9677</div>
<div class="d" style="left:1043px;top:257px">Builder</div>
<div class="d" style="left:1043px;top:280px">Builder</div>
<div class="a" style="left:685px;top:621px;font-size:10.7px;color:#a0a0a0">Packing in an empty box</div>
<div style="position:absolute;left:683px;top:659px;width:10px;height:10px;background:#fff;border:1px solid #fff;border-top-color:#808080;border-left-color:#808080"></div>
<div class="d" style="left:697px;top:658px">Dry run: build and save python script only, do not run</div>
<div class="pb" style="left:681px;top:692px;width:74px;height:23px"><i></i></div>
<div class="pb" style="left:888px;top:692px;width:74px;height:23px"><i></i></div>
<div class="pb" style="left:980px;top:692px;width:124.5px;height:24px"><i style="background:#ece9e2"></i></div>
<div class="d" style="left:698px;top:698px">Cancel</div>
<div class="d" style="left:908.5px;top:698px">Close</div>
<div class="d" style="left:986.5px;top:698px;letter-spacing:0.3px">Generate Molecules</div>
</body></html>
